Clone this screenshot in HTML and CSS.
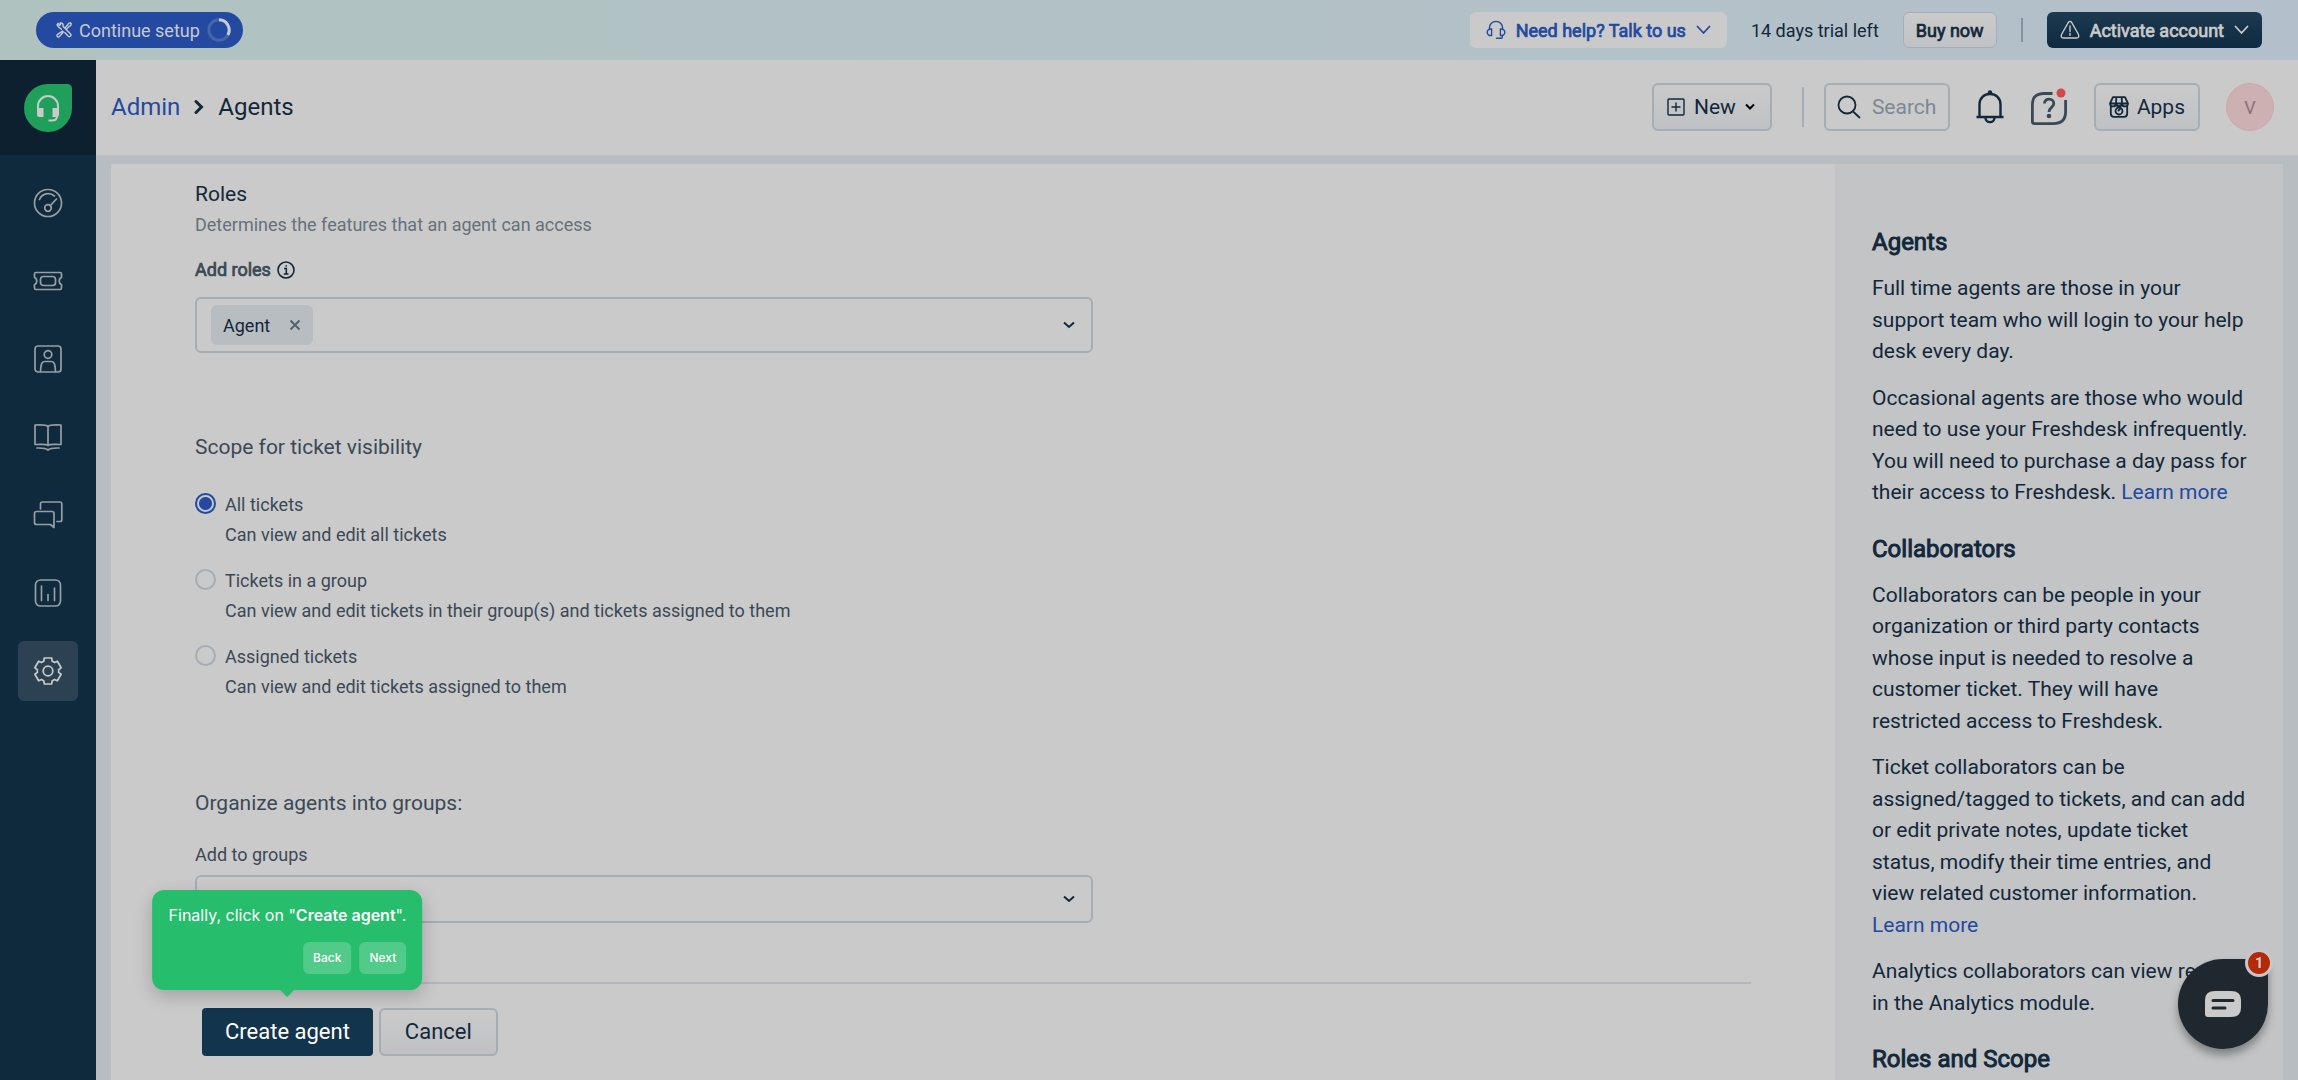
FILE: index.html
```html
<!DOCTYPE html>
<html lang="en">
<head>
<meta charset="utf-8">
<meta name="viewport" content="width=device-width, initial-scale=1">
<title>Agents : Admin</title>
<link rel="stylesheet" href="styles.css">
</head>
<body>
<div class="app">
  <div class="banner">
    <button type="button" class="setup">
      <svg width="16" height="16" viewBox="0 0 16 16" class="line"><path d="M5.5 7.300 2.500 4.900 1 2.800 2.200 1.200 3.200 3.300 4.600 2.700 4.200.9C6.500.6 7.600 2.400 7 4.200L14.800 12.300C15.500 13.500 14.100 15.300 12.600 14.500L8.800 10.500M9 5.800 12 2.600 12.400 1.400 14.300.8 15.300 1.800 14.700 3.600 13.500 4 10.300 7.200M6.600 9.200 7.300 10 3.400 14.600C2.200 15.700.3 14.200 1.200 12.700Z"/></svg>
      Continue setup
      <svg width="24" height="24" viewBox="0 0 24 24" class="ring"><circle cx="12" cy="12" r="10.200"/><path d="M12 1.800A10.200 10.200 0 0 1 20.800 17.100"/></svg>
    </button>
    <div class="banner-right">
      <button type="button" class="help">
        <svg width="20" height="20" viewBox="0 0 20 20" class="line"><path d="M3.400 9V8A6.600 6.600 0 0 1 16.600 8V9M5.600 9C3 8.600 1.200 10.200 1.200 12.300S3 15.900 5.600 15.500ZM14.400 9C17 8.600 18.800 10.200 18.800 12.300S17 15.900 14.400 15.500ZM16.300 15.500V17.300Q16.300 18.300 15.300 18.300H10.500"/></svg>
        <span class="strong">Need help? Talk to us</span>
        <svg width="15" height="10" viewBox="0 0 15 10" class="line thick"><path d="M1.500 1.500 7.500 8 13.500 1.500"/></svg>
      </button>
      <span class="trial">14 days trial left</span>
      <button type="button" class="buy strong">Buy now</button>
      <span class="banner-rule"></span>
      <button type="button" class="activate">
        <svg width="20" height="20" viewBox="0 0 20 20" class="line"><path d="M8.300 2.500Q10 .2 11.700 2.500L18.500 14.500Q19.500 17.700 16.800 18H3.200Q.5 17.700 1.500 14.500ZM10 6V11.500M10 13.500V15.200"/></svg>
        <span class="strong">Activate account</span>
        <svg width="15" height="10" viewBox="0 0 15 10" class="line thick"><path d="M1.500 1.500 7.500 8 13.500 1.500"/></svg>
      </button>
    </div>
  </div>

  <div class="shell">
    <nav class="sidebar" aria-label="Primary">
      <a href="#" class="logo" aria-label="Home">
        <svg width="48" height="48" viewBox="0 0 48 48"><path fill="#1f9f5a" d="M24 0H43Q48 0 48 5V24A24 24 0 1 1 24 0Z"/><path fill="none" stroke="#cacaca" stroke-width="2" d="M14 25V22A10 10 0 0 1 34 22V25M33 32Q33 36.500 28 36.500H24.500"/><path fill="#cacaca" d="M13 24H19.500V33H15.500Q13 33 13 30.500ZM28.500 24H35V30.500Q35 33 32.500 33H28.500Z"/></svg>
      </a>
      <div class="nav-list">
        <a href="#" class="nav-item" aria-label="Dashboard"><svg width="30" height="30" viewBox="0 0 30 30"><circle cx="15" cy="15" r="13.500"/><path d="M6.500 11.500A9.500 9.500 0 0 1 21.500 8M17.200 17.600 23.500 11"/><circle cx="15" cy="20" r="3.300"/></svg></a>
        <a href="#" class="nav-item" aria-label="Tickets"><svg width="30" height="30" viewBox="0 0 30 30"><path d="M3 6.500H27Q28.500 6.500 28.500 8V11.500C25.500 12.500 25.500 17.500 28.500 18.500V22Q28.500 23.500 27 23.500H3Q1.500 23.500 1.500 22V18.500C4.500 17.500 4.500 12.500 1.500 11.500V8Q1.500 6.500 3 6.500Z"/><rect x="7.500" y="10.500" width="15" height="9" rx="3"/></svg></a>
        <a href="#" class="nav-item" aria-label="Contacts"><svg width="30" height="30" viewBox="0 0 30 30"><rect x="2" y="2" width="26" height="26" rx="3"/><circle cx="15" cy="10.500" r="3.800"/><path d="M7.500 27.500C8 19 9 17.500 12 17.500H18C21 17.500 22 19 22.500 27.500"/></svg></a>
        <a href="#" class="nav-item" aria-label="Solutions"><svg width="30" height="30" viewBox="0 0 30 30"><path d="M15 4.500C13 2.300 9 3 2 3V22.500C9 22.500 13 21.500 15 23.500C17 21.500 21 22.500 28 22.500V3C21 3 17 2.300 15 4.500ZM15 4.500V23.500M4 26C10 26 12.500 25.700 15 28C17.500 25.700 20 26 26 26"/></svg></a>
        <a href="#" class="nav-item" aria-label="Forums"><svg width="30" height="30" viewBox="0 0 30 30"><path d="M7.500 9V4Q7.500 2 9.500 2H27Q28.800 2 28.800 4V20Q28.800 21.500 27 21.500H24M3.500 11.500H19Q21 11.500 21 13.500V27.500L17.500 24.500H3.500Q1.500 24.500 1.500 22.500V13.500Q1.500 11.500 3.500 11.500Z"/></svg></a>
        <a href="#" class="nav-item" aria-label="Analytics"><svg width="30" height="30" viewBox="0 0 30 30"><rect x="2.500" y="2" width="25" height="26" rx="5"/><path d="M8.500 8V22.500M15 16.500V22.500M21.500 10V22.500"/></svg></a>
        <a href="#" class="nav-item active" aria-label="Admin"><svg width="30" height="30" viewBox="0 0 30 30"><path d="M10.890 5.070 11.230 2.010 18.770 2.010 19.110 5.070 21.550 6.480 24.370 5.240 28.140 11.770 25.660 13.590V16.410L28.140 18.230 24.370 24.760 21.550 23.520 19.110 24.930 18.770 27.990H11.230L10.890 24.930 8.450 23.520 5.630 24.760 1.860 18.230 4.340 16.410V13.590L1.860 11.770 5.630 5.240 8.450 6.480Z"/><circle cx="15" cy="15" r="4.800"/></svg></a>
      </div>
    </nav>

    <div class="page">
      <header class="header">
        <div class="crumbs">
          <a href="#">Admin</a>
          <svg width="10" height="16" viewBox="0 0 10 16" class="crumb-arrow"><path d="M2 2.500 7.500 8 2 13.500"/></svg>
          <span>Agents</span>
        </div>
        <div class="tools">
          <button type="button" class="btn new">
            <svg width="18" height="18" viewBox="0 0 18 18" class="line"><rect x="1" y="1" width="16" height="16" rx="1"/><path d="M9 5V13M5 9H13"/></svg>
            New
            <svg width="10" height="8" viewBox="0 0 10 8" class="caret"><path d="M1 1.500 5 5.500 9 1.500"/></svg>
          </button>
          <span class="tool-rule"></span>
          <label class="search">
            <svg width="24" height="24" viewBox="0 0 24 24" class="line thick"><circle cx="10" cy="10" r="8.500"/><path d="M16 16.500 22.500 22.500"/></svg>
            <input type="text" placeholder="Search" aria-label="Search">
          </label>
          <button type="button" class="icon-btn" aria-label="Notifications">
            <svg width="28" height="34" viewBox="0 0 28 34"><g fill="none" stroke="#12283a" stroke-width="2.400"><path d="M.5 27H27.500M3.500 27V14.500C3.500 8 8 4 14 4S24.500 8 24.500 14.500V27M9.500 28C9.700 33.500 18.300 33.500 18.500 28"/></g><circle cx="14" cy="2.500" r="2.200" fill="#12283a"/></svg>
          </button>
          <button type="button" class="icon-btn" aria-label="Help">
            <svg width="38" height="38" viewBox="0 0 38 38"><g fill="none" stroke="#3b4956" stroke-width="2.800"><path d="M22.500 5.500H14C5.500 5.500 2.400 9.500 2.400 17V33.500Q2.400 35.600 4.500 35.600H23C31.500 35.600 35.600 31.500 35.600 24V12"/><path d="M14.500 15.500C14.500 9.500 23.800 9.700 23.800 15.500C23.800 19.500 19 19.300 19 24"/></g><circle cx="19" cy="28" r="2.300" fill="#3b4956"/><circle cx="31" cy="5" r="4.500" fill="#d24a48"/></svg>
          </button>
          <button type="button" class="btn apps">
            <svg width="20" height="22" viewBox="0 0 20 22" class="line thick"><path d="M4 1.200H16L19 7.500C19 11.300 13.500 11.300 13 8C12.500 11 7.500 11 7 8C6.500 11.300 1 11.300 1 7.500ZM7.300 1.200 7 8M12.700 1.200 13 8M1 7.500H19M1.800 10V17.500Q1.800 20.800 5 20.800H15Q18.200 20.800 18.200 17.500V10"/><circle cx="10" cy="15" r="3.500"/><path d="M9.500 14.500 11 13"/></svg>
            Apps
          </button>
          <button type="button" class="avatar" aria-label="Profile">V</button>
        </div>
      </header>

      <div class="workspace">
        <main class="main">
          <form class="form">
            <section class="roles">
              <h2 class="title">Roles</h2>
              <p class="hint">Determines the features that an agent can access</p>
              <div class="label-row">
                <span class="strong">Add roles</span>
                <svg width="18" height="18" viewBox="0 0 18 18" class="info"><circle cx="9" cy="9" r="8"/><path d="M7 7.500H9.300V13M6.700 13H11.500M8.500 5H10"/></svg>
              </div>
              <div class="picker">
                <span class="chip">Agent
                  <button type="button" class="chip-x" aria-label="Remove Agent"><svg width="12" height="12" viewBox="0 0 12 12"><path d="M1.500 1.500 10.500 10.500M10.500 1.500 1.500 10.500"/></svg></button>
                </span>
                <svg width="12" height="8" viewBox="0 0 12 8" class="drop"><path d="M1 1.500 6 6 11 1.500"/></svg>
              </div>
            </section>

            <fieldset class="scope">
              <legend class="title soft">Scope for ticket visibility</legend>
              <div class="option">
                <input type="radio" name="scope" id="s1" checked>
                <label for="s1">All tickets<br>Can view and edit all tickets</label>
              </div>
              <div class="option">
                <input type="radio" name="scope" id="s2">
                <label for="s2">Tickets in a group<br>Can view and edit tickets in their group(s) and tickets assigned to them</label>
              </div>
              <div class="option">
                <input type="radio" name="scope" id="s3">
                <label for="s3">Assigned tickets<br>Can view and edit tickets assigned to them</label>
              </div>
            </fieldset>

            <section class="groups">
              <h2 class="title soft">Organize agents into groups:</h2>
              <label for="groups" class="group-label">Add to groups</label>
              <div class="select-wrap">
                <select id="groups"><option>Select</option></select>
                <svg width="12" height="8" viewBox="0 0 12 8" class="drop"><path d="M1 1.500 6 6 11 1.500"/></svg>
              </div>
            </section>

            <div class="actions">
              <div class="create-wrap">
                <button type="button" class="create">Create agent</button>
                <div class="tour" role="dialog" aria-label="Product tour">
                  <p>Finally, click on "<b>Create agent</b>".</p>
                  <div class="tour-actions">
                    <button type="button">Back</button>
                    <button type="button">Next</button>
                  </div>
                </div>
              </div>
              <button type="button" class="btn cancel">Cancel</button>
            </div>
          </form>
        </main>

        <aside class="aside">
          <h3>Agents</h3>
          <p>Full time agents are those in your support team who will login to your help desk every day.</p>
          <p>Occasional agents are those who would need to use your Freshdesk infrequently. You will need to purchase a day pass for their access to Freshdesk. <a href="#">Learn more</a></p>
          <h3>Collaborators</h3>
          <p>Collaborators can be people in your organization or third party contacts whose input is needed to resolve a customer ticket. They will have restricted access to Freshdesk.</p>
          <p>Ticket collaborators can be assigned/tagged to tickets, and can add or edit private notes, update ticket status, modify their time entries, and view related customer information. <a href="#">Learn more</a></p>
          <p>Analytics collaborators can view reports in the Analytics module.</p>
          <h3>Roles and Scope</h3>
        </aside>
      </div>
    </div>
  </div>

  <button type="button" class="chat" aria-label="Chat, 1 unread message">
    <svg width="36" height="26" viewBox="0 0 36 26"><path fill="#cacaca" d="M10 0H26Q36 0 36 9V17Q36 26 26 26H3Q0 26 0 23V9Q0 0 10 0Z"/><path stroke="#1f282e" stroke-width="3" stroke-linecap="round" d="M8 9.500H28M8 17H20"/></svg>
    <span class="badge">1</span>
  </button>
</div>
</body>
</html>
```
FILE: styles.css
```css
:root {
  --paper: #cacaca;
  --ink: #12283a;
  --soft-ink: #3b4956;
  --blue: #2349a0;
  --edge: #a5adb5;
  --mist: #b8bdc1;
}

* { box-sizing: border-box; }

body {
  margin: 0;
  font-family: Roboto, sans-serif;
  font-size: 18px;
  color: var(--ink);
  background: var(--mist);
}

h2, h3, p { margin: 0; font-weight: 400; }
a { color: var(--blue); text-decoration: none; }
button, input, select { font: inherit; color: inherit; }
button { padding: 0; border: 0; background: none; cursor: pointer; white-space: nowrap; }
svg { display: block; flex: none; }

.line { fill: none; stroke: currentColor; stroke-width: 1.4; stroke-linejoin: round; stroke-linecap: round; }
.line.thick { stroke-width: 1.8; }
.strong { -webkit-text-stroke: 0.04em currentColor; }

.app { display: flex; flex-direction: column; height: 100vh; overflow: hidden; }

/* Trial banner */
.banner {
  flex: none;
  display: flex;
  align-items: center;
  justify-content: space-between;
  height: 60px;
  padding: 0 36px;
  background: linear-gradient(90deg, #b0c2c0, #b3c1c8 70%, #b3bfcb);
}
.banner button { height: 36px; display: flex; align-items: center; }
.banner-right { display: flex; align-items: center; gap: 24px; }
.setup { gap: 7px; padding: 0 12px 0 20px; border-radius: 18px; background: var(--blue); color: #c5cad3; }
.ring { fill: none; stroke: #4766a9; stroke-width: 3; }
.ring path { stroke: #c5cad3; }
.help { gap: 10px; padding: 0 16px; border-radius: 6px; background: var(--paper); color: var(--blue); }
.buy { padding: 0 12px; border: 1px solid var(--edge); border-radius: 6px; background: linear-gradient(#cacaca, #c0c2c5); }
.banner-rule { width: 2px; height: 24px; background: #8593a0; }
.activate { gap: 10px; padding: 0 13px; border-radius: 6px; background: linear-gradient(#1d3a52, #0e2a40); color: var(--paper); }

/* Sidebar */
.shell { flex: 1; min-height: 0; display: flex; }
.sidebar { flex: none; width: 96px; background: #0f293d; }
.logo { display: flex; align-items: center; justify-content: center; height: 95px; background: #0c202f; }
.nav-list { display: flex; flex-direction: column; align-items: center; gap: 18px; padding-top: 18px; }
.nav-item {
  display: flex;
  align-items: center;
  justify-content: center;
  width: 60px;
  height: 60px;
  border-radius: 6px;
  color: #979ea4;
}
.nav-item svg { fill: none; stroke: currentColor; stroke-width: 1.7; stroke-linejoin: round; stroke-linecap: round; }
.nav-item.active { background: #2c4252; color: var(--paper); }

/* Header */
.page { flex: 1; min-width: 0; display: flex; flex-direction: column; }
.header {
  flex: none;
  display: flex;
  align-items: center;
  justify-content: space-between;
  height: 96px;
  padding: 0 24px 1px 15px;
  background: var(--paper);
  border-bottom: 1px solid #c0c3c6;
}
.crumbs { display: flex; align-items: center; gap: 14px; font-size: 24px; line-height: 26px; }
.crumb-arrow { fill: none; stroke: var(--ink); stroke-width: 3; stroke-linecap: round; }
.tools { display: flex; align-items: center; gap: 26px; }
.btn {
  display: flex;
  align-items: center;
  justify-content: center;
  height: 48px;
  font-size: 21px;
  border: 2px solid var(--edge);
  border-radius: 6px;
  background: linear-gradient(#cacaca, #bfc1c4);
}
.new { gap: 9px; padding: 0 15px 0 13px; }
.caret { fill: none; stroke: #000; stroke-width: 2; }
.tool-rule { width: 2px; height: 40px; margin: 0 -6px 0 4px; background: var(--edge); }
.search {
  display: flex;
  align-items: center;
  gap: 11px;
  width: 126px;
  height: 48px;
  padding: 0 11px;
  border: 2px solid var(--edge);
  border-radius: 6px;
}
.search input { min-width: 0; width: 100%; padding: 0; border: 0; background: none; font-size: 21px; outline: 0; }
.search input::placeholder { color: #7c8895; opacity: 1; }
.apps { gap: 8px; padding: 0 13px; }
.avatar { width: 48px; height: 48px; border: 1px solid #d0a8aa; border-radius: 50%; background: #cdb0b1; color: #8a7278; }

/* Workspace */
.workspace { flex: 1; min-height: 0; display: grid; grid-template-columns: minmax(0, 1fr) 448px; padding: 8px 15px 0; overflow: hidden; }
.main { padding: 14px 84px 0; background: var(--paper); }
.title { font-size: 21px; line-height: 32px; }
.soft { color: var(--soft-ink); }
.hint { margin-top: 1px; line-height: 27px; color: #66717b; }
.label-row { display: flex; align-items: center; gap: 6px; margin-top: 18px; line-height: 27px; color: var(--soft-ink); }
.info { fill: none; stroke: var(--ink); stroke-width: 1.6; }

.picker {
  display: flex;
  align-items: center;
  justify-content: space-between;
  width: 57.7%;
  height: 56px;
  margin-top: 14px;
  padding: 0 16px 0 14px;
  border: 2px solid var(--edge);
  border-radius: 6px;
}
.chip { display: flex; align-items: center; gap: 19px; height: 40px; padding: 0 12px; border-radius: 6px; background: var(--mist); }
.chip-x svg { fill: none; stroke: #56636f; stroke-width: 2; }
.drop { fill: none; stroke: var(--ink); stroke-width: 2; }

.scope { margin: 78px 0 0; padding: 0; border: 0; }
.scope legend { padding: 0; margin-bottom: 27px; }
.option { display: flex; align-items: flex-start; gap: 9px; line-height: 30px; color: var(--soft-ink); }
.option + .option { margin-top: 16px; }
.option input {
  flex: none;
  appearance: none;
  width: 21px;
  height: 21px;
  margin: 3px 0 0;
  border: 2px solid var(--edge);
  border-radius: 50%;
}
.option input:checked {
  border: 2px solid var(--blue);
  background: radial-gradient(circle, var(--blue) 6px, transparent 7px);
}

.groups { margin-top: 85px; }
.group-label { display: block; margin-top: 22px; line-height: 27px; color: var(--soft-ink); }
.select-wrap { display: grid; align-items: center; width: 57.7%; margin-top: 7px; }
.select-wrap > * { grid-area: 1 / 1; }
.select-wrap .drop { justify-self: end; margin-right: 18px; pointer-events: none; }
.select-wrap select {
  appearance: none;
  width: 100%;
  height: 48px;
  padding: 0 10px;
  border: 2px solid var(--edge);
  border-radius: 6px;
  background: none;
  color: #7c8895;
}

.actions { display: flex; gap: 6px; margin-top: 59px; padding: 24px 7px; border-top: 2px solid #b3b7bb; }
.create-wrap { position: relative; }
.create { height: 48px; padding: 0 23px 2px; border-radius: 4px; background: #12344d; color: #fff; font-size: 22px; }
.cancel { padding: 0 24px 2px; font-size: 22px; }

/* Product tour bubble, anchored to the create button */
.tour {
  position: absolute;
  left: 50%;
  bottom: calc(100% + 18px);
  transform: translateX(-50%);
  padding: 14px 16px 16px;
  border-radius: 12px;
  background: #26bd6c;
  color: #fff;
  font-family: Inter, sans-serif;
  font-size: 16px;
  line-height: 22px;
  white-space: nowrap;
  box-shadow: 0 6px 18px rgba(0, 0, 0, 0.2);
}
.tour b { font-weight: 600; }
.tour::after {
  content: "";
  position: absolute;
  top: 100%;
  left: calc(50% - 7px);
  border: 7px solid transparent;
  border-top-color: #26bd6c;
  border-bottom: 0;
}
.tour-actions { display: flex; justify-content: flex-end; gap: 8px; margin-top: 16px; }
.tour-actions button { height: 32px; padding: 0 10px; border-radius: 6px; background: #52ca89; font-size: 12px; font-weight: 500; }

/* Help column */
.aside { padding: 60px 34px 0 37px; background: #c2c4c6; font-size: 21px; line-height: 1.5; }
.aside h3 { margin-bottom: 13px; font-size: 24px; -webkit-text-stroke: 0.04em currentColor; }
.aside p + p { margin-top: 15px; }
.aside p + h3 { margin-top: 22px; }

/* Chat launcher */
.chat {
  position: fixed;
  right: 30px;
  bottom: 31px;
  display: flex;
  align-items: center;
  justify-content: center;
  width: 90px;
  height: 90px;
  border-radius: 50% 4px 50% 50%;
  background: #1f282e;
  box-shadow: 0 6px 8px rgba(0, 0, 0, 0.35);
}
.badge {
  position: absolute;
  top: -10px;
  right: -5px;
  width: 28px;
  height: 28px;
  border: 3px solid #c6c7ca;
  border-radius: 50%;
  background: #b42a08;
  color: #d8d0ce;
  font-size: 15px;
  font-weight: 700;
  line-height: 22px;
}
```
